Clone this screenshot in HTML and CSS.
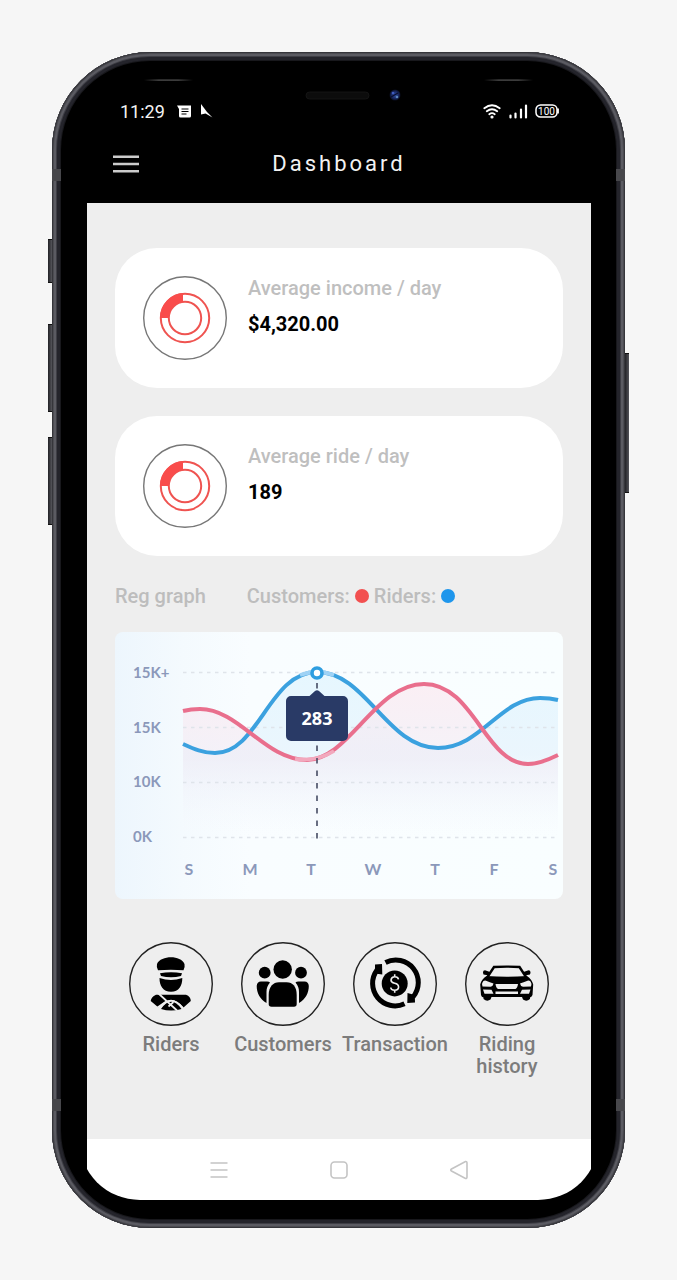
FILE: index.html
```html
<!DOCTYPE html>
<html lang="en">
<head>
<meta charset="utf-8">
<meta name="viewport" content="width=device-width, initial-scale=1">
<title>Dashboard</title>
<link rel="stylesheet" href="styles.css">
</head>
<body>
<div class="phone">
  <span class="side-key key-mute"></span>
  <span class="side-key key-up"></span>
  <span class="side-key key-down"></span>
  <span class="side-key key-power"></span>
  <span class="band band-left band-high"></span>
  <span class="band band-right band-high"></span>
  <span class="band band-left band-low"></span>
  <span class="band band-right band-low"></span>

  <header class="top">
    <svg class="sensors" viewBox="0 0 504 25" aria-hidden="true">
      <defs>
        <linearGradient id="glint"><stop offset="0" stop-color="#000"/><stop offset=".3" stop-color="#555"/><stop offset=".7" stop-color="#555"/><stop offset="1" stop-color="#000"/></linearGradient>
        <radialGradient id="lens"><stop offset="0" stop-color="#304da8"/><stop offset=".6" stop-color="#1a2a66"/><stop offset="1" stop-color="#080c20"/></radialGradient>
      </defs>
      <rect x="57" y="3.500" width="49" height="1.200" fill="url(#glint)"/>
      <rect x="397" y="3.500" width="49" height="1.200" fill="url(#glint)"/>
      <rect x="219" y="16" width="63" height="7" rx="3.500" fill="#0c0c0c" stroke="#181818" stroke-width=".8"/>
      <circle cx="308" cy="19" r="5.500" fill="url(#lens)"/>
      <circle cx="306" cy="17" r="1.300" fill="#3f5cc0"/><circle cx="310" cy="21" r="1.300" fill="#5c86bd"/>
      <path d="M304 21l7-4" stroke="#0a1030" stroke-width="1.400"/>
    </svg>

    <div class="status">
      <div class="status-side">
        <time>11:29</time>
        <svg width="14" height="13" viewBox="0 0 14 13" aria-hidden="true"><path d="M0 .5h14V11a1.500 1.500 0 0 1-1.500 1.500H3.500A1.500 1.500 0 0 1 2 11V4z" fill="#fff"/><path d="M4.500 4h7M4.500 6.500h7M4.500 9h5" stroke="#000" stroke-width="1.100"/></svg>
        <svg width="13" height="14" viewBox="0 0 13 14" aria-hidden="true"><path d="M1 0L7 8 12.500 13.500 5.500 9.500 1 10.500z" fill="#fff"/></svg>
      </div>
      <div class="status-side status-right">
        <svg width="19" height="15" viewBox="0 0 19 15" fill="none" stroke="#fff" stroke-width="1.800" stroke-linecap="round" aria-hidden="true"><path d="M1.300 4.300Q9 -1.800 16.700 4.300M3.800 7.300Q9 3.200 14.200 7.300M6.300 10.200Q9 8.200 11.700 10.200"/><circle cx="9" cy="13" r=".7" fill="#fff"/></svg>
        <svg width="19" height="15" viewBox="0 0 19 15" stroke="#fff" stroke-width="2.200" stroke-linecap="round" aria-hidden="true"><path d="M1.500 11.500v2M6.500 9.500v4M12 5.500v8M17 1.500v12"/></svg>
        <svg class="battery" width="24" height="14" viewBox="0 0 24 14" role="img" aria-label="Battery 100"><rect x="1" y=".9" width="21" height="12.200" rx="4.500" fill="none" stroke="#fff" stroke-width="1.500"/><path d="M23 4.500v5" stroke="#fff" stroke-width="1.800"/><text x="11.500" y="10.500" text-anchor="middle">100</text></svg>
      </div>
    </div>

    <div class="appbar">
      <button class="menu" type="button" aria-label="Menu">
        <svg width="26" height="18" viewBox="0 0 26 18" stroke="#ccc" stroke-width="2.600" aria-hidden="true"><path d="M0 1.700h26M0 9h26M0 16.300h26"/></svg>
      </button>
      <h1>Dashboard</h1>
    </div>
  </header>

  <main class="content">
    <section class="cards">
      <article class="card">
        <svg class="badge" viewBox="0 0 84 84" aria-hidden="true"><circle cx="42" cy="42" r="41.300" fill="none" stroke="#777" stroke-width="1.400"/><g fill="none" stroke="#ef5350" stroke-width="2"><circle cx="42" cy="42" r="24.200"/><circle cx="42" cy="42" r="16.200"/></g><path d="M17 42A25 25 0 0 1 40 17V26A16.200 16.200 0 0 0 25.800 42z" fill="#f94c4b"/></svg>
        <div class="card-text"><h2>Average income / day</h2><p>$4,320.00</p></div>
      </article>
      <article class="card">
        <svg class="badge" viewBox="0 0 84 84" aria-hidden="true"><circle cx="42" cy="42" r="41.300" fill="none" stroke="#777" stroke-width="1.400"/><g fill="none" stroke="#ef5350" stroke-width="2"><circle cx="42" cy="42" r="24.200"/><circle cx="42" cy="42" r="16.200"/></g><path d="M17 42A25 25 0 0 1 40 17V26A16.200 16.200 0 0 0 25.800 42z" fill="#f94c4b"/></svg>
        <div class="card-text"><h2>Average ride / day</h2><p>189</p></div>
      </article>
    </section>

    <div class="legend">
      <h2>Reg graph</h2>
      <div class="keys">
        <span>Customers:</span><i class="dot dot-red"></i>
        <span>Riders:</span><i class="dot dot-blue"></i>
      </div>
    </div>

    <svg class="chart" viewBox="0 0 448 267" role="img" aria-label="Registrations of customers and riders by weekday">
      <defs>
        <linearGradient id="sky"><stop offset="0" stop-color="#edf6fd"/><stop offset=".15" stop-color="#f4fafe"/><stop offset=".3" stop-color="#f9fdff"/><stop offset="1" stop-color="#f9feff"/></linearGradient>
        <linearGradient id="blueFill" gradientUnits="userSpaceOnUse" x1="0" y1="40" x2="0" y2="205"><stop offset="0" stop-color="#e4f6fe" stop-opacity=".9"/><stop offset=".5" stop-color="#e9f5fd" stop-opacity=".9"/><stop offset="1" stop-color="#f6fbff" stop-opacity="0"/></linearGradient>
        <linearGradient id="redFill" gradientUnits="userSpaceOnUse" x1="0" y1="50" x2="0" y2="205"><stop offset="0" stop-color="#fbecf2" stop-opacity=".85"/><stop offset=".5" stop-color="#f2ebf4" stop-opacity=".6"/><stop offset="1" stop-color="#f6f8fd" stop-opacity="0"/></linearGradient>
      </defs>
      <rect width="448" height="267" fill="url(#sky)"/>
      <path fill="url(#blueFill)" d="M68 112C79 117 88 121 100 121C144 121 154 40 202 40C251 40 272 116 323 116C366 116 385 66 425 66Q435 66 443 68V205H68z"/>
      <path fill="url(#redFill)" d="M68 79Q76 77 85 77C124 77 150 128 192 128C234 128 260 52 309 52C359 52 370 132 413 132C424 132 435 127 443 123V205H68z"/>
      <path class="grid" d="M68 40.500H443M68 95.500H443M68 150.500H443M68 205.500H443"/>
      <path class="line line-blue" d="M68 112C79 117 88 121 100 121C144 121 154 40 202 40C251 40 272 116 323 116C366 116 385 66 425 66Q435 66 443 68"/>
      <path class="line line-red" d="M68 79Q76 77 85 77C124 77 150 128 192 128C234 128 260 52 309 52C359 52 370 132 413 132C424 132 435 127 443 123"/>
      <path d="M185 43Q202 37 219 43" fill="none" stroke="#9ed2f5" stroke-width="3.800"/>
      <path d="M180 127Q201 130 219 119" fill="none" stroke="#f2a8bd" stroke-width="3.800"/>
      <path d="M202 51V207" stroke="#454b63" stroke-width="1.600" stroke-dasharray="5.500 7"/>
      <circle cx="202" cy="41" r="5" fill="#fff" stroke="#2f9ee0" stroke-width="3.600"/>
      <path d="M176 64h18.500l5.500-5q2-1.500 4 0l5.500 5H228a5 5 0 0 1 5 5v35a5 5 0 0 1-5 5h-52a5 5 0 0 1-5-5V69a5 5 0 0 1 5-5z" fill="#293a66"/>
      <text class="tip" x="202" y="93">283</text>
      <g class="scale"><text x="18" y="46">15K+</text><text x="18" y="101">15K</text><text x="18" y="155">10K</text><text x="18" y="210">0K</text></g>
      <g class="days"><text x="74" y="243">S</text><text x="135" y="243">M</text><text x="196" y="243">T</text><text x="258" y="243">W</text><text x="320" y="243">T</text><text x="379" y="243">F</text><text x="438" y="243">S</text></g>
    </svg>

    <nav class="actions" aria-label="Sections">
      <button type="button">
        <svg class="badge" viewBox="0 0 84 84" aria-hidden="true"><circle cx="42" cy="42" r="41.300" fill="none" stroke="#222" stroke-width="1.400"/>
          <path d="M29 28.300Q27.200 25.500 28 22C30 17.500 36 15.300 42 15.300S53.500 17.500 55.500 22Q56.200 25.500 54.500 28.300Q42 27 29 28.300z"/>
          <path d="M31 31.200Q42 29.500 53 31.200L52 34Q42 36.500 32 34z"/>
          <path d="M30.500 36Q42 40 53.300 36C53.300 44 50 49.700 42 49.700S30.500 44 30.500 36z"/>
          <path d="M27 52.700H57Q61.800 54.500 61.800 59L54.500 65.500Q42 50 29.500 65.500L21.700 59Q22 55 27 52.700z"/>
          <path d="M32 67Q42 52 52.500 67Q42 70 32 67z"/>
          <path d="M29.500 51.500L48 68.500M28.500 65.500L38 59M39.500 64.500L44.500 60" stroke="#eee" stroke-width="1.700" fill="none"/>
          <path d="M31 66Q42 51.500 54 66" stroke="#eee" stroke-width="1.400" fill="none"/>
        </svg>
        <span>Riders</span>
      </button>
      <button type="button">
        <svg class="badge" viewBox="0 0 84 84" aria-hidden="true"><circle cx="42" cy="42" r="41.300" fill="none" stroke="#222" stroke-width="1.400"/>
          <circle cx="41.700" cy="27.500" r="9.200"/><circle cx="23.700" cy="30.700" r="5.900"/><circle cx="60" cy="30.700" r="5.900"/>
          <path d="M27.700 62V53C27.700 45 32 40.300 38 40.300H45.500C52 40.300 55.700 45 55.700 53V62Q55.700 64.700 53 64.700H30.500Q27.700 64.700 27.700 62z"/>
          <path d="M29 40.500C26.500 43.500 25.500 46 25.500 50V61C19 57 15.700 51 15.700 44Q16 39.500 20 39.500H26Q28 39.500 29 40.500zM54.500 40.500C57 43.500 58 46 58 50V61C64.500 57 67.800 51 67.800 44Q67.500 39.500 63.500 39.500H57.500Q55.500 39.500 54.500 40.500z"/>
        </svg>
        <span>Customers</span>
      </button>
      <button type="button">
        <svg class="badge" viewBox="0 0 84 84" aria-hidden="true"><circle cx="42" cy="42" r="41.300" fill="none" stroke="#222" stroke-width="1.400"/>
          <path d="M32.500 20.500A22.500 22.500 0 0 1 60 55M51.500 61.800A22.500 22.500 0 0 1 24 28" fill="none" stroke="#000" stroke-width="5"/>
          <path d="M22 22.500L29 22 29.300 32.500 22 31.500zM54.500 51L61.800 53 62 60.500 54.300 61z"/>
          <circle cx="41.700" cy="41.400" r="13"/>
          <path d="M45.500 37.300Q45 34.800 41.700 34.800T38 38Q38 40.500 41.700 41.300T45.600 45Q45.500 48.200 41.700 48.200T37.800 45.500M41.700 32.300V34.800M41.700 48.200V50.700" fill="none" stroke="#eee" stroke-width="1.600"/>
        </svg>
        <span>Transaction</span>
      </button>
      <button type="button">
        <svg class="badge" viewBox="0 0 84 84" aria-hidden="true"><circle cx="42" cy="42" r="41.300" fill="none" stroke="#222" stroke-width="1.400"/>
          <path d="M22.500 35L29 25Q42 24.200 54.500 25L61 35" fill="none" stroke="#000" stroke-width="2.400"/>
          <path d="M24 33.500L18.500 32.500Q17 28.500 20 28.200L25 30zM59.500 33.500L65 32.500Q66.500 28.500 63.500 28.200L58.500 30z"/>
          <path d="M21.500 34Q42 35.500 62 34Q67 37.500 68.200 42.500L67.500 53Q66.500 55 65 55.500V57Q61.500 60 58 57.500L57 55H26.500L25.500 57.500Q22 60 18.500 57V55.500Q16.500 55 16 53L15.200 42.500Q16.500 37 21.500 34z"/>
          <path d="M17 42Q18 38 21 38.700Q25 40.500 28.500 41.500Q28 44.500 25.500 44.800L17.500 44.500zM66.500 42Q65.500 38 62.500 38.700Q58.500 40.500 55 41.500Q55.500 44.500 58 44.800L66 44.500zM30.500 42H53Q52.500 46 50.500 47H33Q31 46 30.500 42zM18 47.500L26.500 47.700 28.500 51.700H19.500zM65.500 47.500L57 47.700 55 51.700H64zM30.500 49.500H53V52H30.500z" fill="#eee"/>
        </svg>
        <span>Riding history</span>
      </button>
    </nav>
  </main>

  <nav class="system" aria-label="System navigation">
    <button type="button" aria-label="Recent apps"><svg width="20" height="20" viewBox="0 0 20 20" aria-hidden="true"><path d="M1.500 3h17M1.500 10h17M1.500 17h17"/></svg></button>
    <button type="button" aria-label="Home"><svg width="20" height="20" viewBox="0 0 20 20" aria-hidden="true"><rect x="2" y="2" width="16" height="16" rx="3.500"/></svg></button>
    <button type="button" aria-label="Back"><svg width="20" height="20" viewBox="0 0 20 20" aria-hidden="true"><path d="M16.500 1.500Q18 1.200 18 3V17Q18 18.800 16.500 18.500L2.500 11Q1 10 2.500 9z"/></svg></button>
  </nav>
</div>
</body>
</html>
```

FILE: styles.css
```css
* { box-sizing: border-box; }

body {
  margin: 0;
  padding: 52px;
  background: #f6f6f6;
  font-family: Roboto, "Liberation Sans", sans-serif;
  color: #000;
}

h1, h2, p { margin: 0; font: inherit; }

button {
  padding: 0;
  border: 0;
  background: none;
  font: inherit;
  color: inherit;
  cursor: pointer;
}

svg { display: block; }

.phone {
  position: relative;
  padding: 0 34px 28px 35px;
  border-radius: 98px;
  background: #000;
  box-shadow:
    inset 0 0 0 1px #36363b,
    inset 0 0 0 2px #4c4c52,
    inset 0 0 0 4px #5b5b62,
    inset 0 0 0 5px #3e3e45,
    inset 0 0 0 8px #24242b,
    inset 0 0 0 9px #18181c;
}

/* Hardware keys on the edges of the case */
.side-key {
  position: absolute;
  left: -4px;
  width: 4px;
  background: linear-gradient(90deg, #222226, #55555b);
  border-block: 1px solid #111;
}
.key-mute { top: 187px; height: 44px; }
.key-up { top: 272px; height: 88px; }
.key-down { top: 385px; height: 88px; }
.key-power { top: 301px; left: auto; right: -4px; height: 140px; }

/* Antenna bands */
.band { position: absolute; width: 9px; height: 12px; background: #47474b; }
.band-left { left: 0; }
.band-right { right: 0; }
.band-high { top: 117px; }
.band-low { bottom: 117px; }

.top { padding-top: 24px; }

.sensors { width: 100%; }

.status {
  display: flex;
  justify-content: space-between;
  align-items: center;
  height: 20px;
  padding: 0 32px 0 33px;
  color: #f4f4f4;
  font-size: 18px;
}
.status-side { display: flex; align-items: center; gap: 9px; }
.status-side time { margin-right: 3px; }
.status-right { gap: 7px; }
.battery text { fill: #fff; font-size: 10px; }

.appbar {
  display: grid;
  grid-template-columns: 26px 1fr 26px;
  align-items: center;
  height: 82px;
  padding: 3px 26px 0;
}
.appbar h1 {
  color: #f2f2f2;
  font-size: 22px;
  letter-spacing: 3px;
  text-align: center;
}

.content { padding: 45px 28px 62px; background: #eee; }

.cards { display: grid; gap: 28px; }

.card {
  display: flex;
  gap: 21px;
  padding: 28px;
  border-radius: 42px;
  background: #fff;
}
.badge { flex: none; width: 84px; height: 84px; }
.card-text { font-size: 20px; line-height: 24px; }
.card-text h2 { color: #bfbfbf; font-weight: 500; }
.card-text p { margin-top: 12px; font-weight: 700; }

.legend {
  display: flex;
  gap: 41px;
  margin: 28px 0 24px;
  color: #bdbdbd;
  font-size: 20px;
  font-weight: 500;
  line-height: 24px;
}
.keys { display: flex; align-items: center; gap: 5px; }
.dot { width: 14px; height: 14px; border-radius: 50%; }
.dot-red { background: #f25050; }
.dot-blue { background: #1e96ec; }

.chart { width: 100%; border-radius: 8px; }
.chart text { font-family: Lato, "Open Sans", sans-serif; font-size: 15px; font-weight: 700; fill: #8b98ba; }
.chart .days text { font-size: 16px; text-anchor: middle; }
.chart .tip { font-family: "Open Sans", sans-serif; font-size: 18px; fill: #fff; text-anchor: middle; }
.grid { fill: none; stroke: #dfe4ea; stroke-width: 1.5; stroke-dasharray: 3.5 4.5; }
.line { fill: none; stroke-width: 4; }
.line-blue { stroke: #3ba1df; }
.line-red { stroke: #e96f8d; }

.actions {
  display: grid;
  grid-template-columns: repeat(4, 1fr);
  margin-top: 43px;
}
.actions button {
  display: flex;
  flex-direction: column;
  align-items: center;
  gap: 7px;
  color: #7c7c7c;
  font-size: 20px;
  font-weight: 500;
  line-height: 22px;
}

/* The glass curves in at the lower corners, wider than the display itself */
.system {
  display: flex;
  justify-content: center;
  align-items: center;
  gap: 100px;
  height: 61px;
  background: #fff;
  clip-path: inset(0 -8px 0 -8px round 0 0 66px 66px);
}
.system svg { fill: none; stroke: #c4c4c4; stroke-width: 1.6; }
```
